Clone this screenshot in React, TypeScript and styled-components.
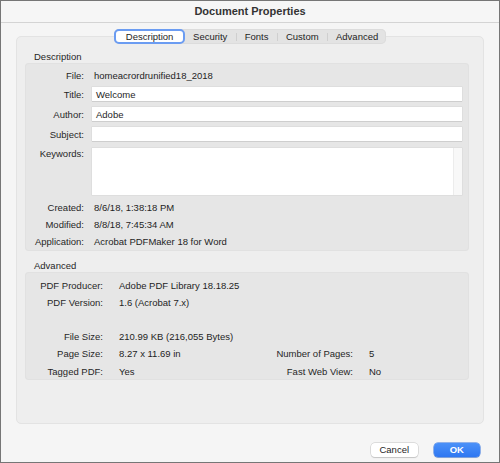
import React from "react";
import styled, { createGlobalStyle } from "styled-components";

const Global = createGlobalStyle`
  html, body { margin: 0; padding: 0; background: #f5f5f5; }
  * { box-sizing: border-box; }
  body { font-family: "Liberation Sans", Arial, Helvetica, sans-serif; font-size: 9.5px; color: #1e1e1e; }
`;

const Window = styled.div`
  width: 500px;
  height: 463px;
  border: 1px solid #767676;
  background: #f5f5f5;
  display: flex;
  flex-direction: column;
  overflow: hidden;
`;

const TitleBar = styled.div`
  height: 22px;
  flex: none;
  border-bottom: 1px solid #d4d4d4;
  background: #f6f6f6;
  display: flex;
  align-items: center;
  justify-content: center;
  font-size: 11px;
  font-weight: bold;
  color: #333333;
  padding-bottom: 1px;
`;

const Body = styled.div`
  flex: 1;
  display: flex;
  flex-direction: column;
  padding: 6px 15px 0;
`;

const TabsRow = styled.div`
  display: flex;
  justify-content: center;
  position: relative;
  z-index: 1;
  height: 15px;
`;

const TabBar = styled.div`
  display: flex;
  align-items: center;
  height: 15px;
  background: #e3e3e3;
  border-radius: 5px;
  box-shadow: inset 0 0 0 1px #dcdcdc;
`;

const Tab = styled.div<{ $active?: boolean }>`
  height: 15px;
  display: flex;
  align-items: center;
  color: #1e1e1e;
  padding: ${(p) => (p.$active ? "0 9.5px 0 10.3px" : "0 8.2px")};
  background: ${(p) => (p.$active ? "#ffffff" : "transparent")};
  border: ${(p) => (p.$active ? "2px solid #6b9cf2" : "none")};
  border-radius: 5px;
`;

const TabSep = styled.div`
  width: 1px;
  height: 8px;
  background: #cfcfcf;
`;

const Panel = styled.div`
  margin-top: -8px;
  height: 388px;
  flex: none;
  background: #eeeeee;
  border: 1px solid #e3e3e3;
  border-radius: 5px;
  padding: 13px 14px 0 8px;
  display: flex;
  flex-direction: column;
`;

const SectionTitle = styled.div<{ $mt?: number }>`
  height: 13px;
  line-height: 13px;
  padding-left: 9px;
  margin-top: ${(p) => p.$mt ?? 0}px;
  color: #262626;
`;

const Group = styled.div<{ $h: number }>`
  height: ${(p) => p.$h}px;
  background: #e6e6e6;
  border-radius: 4px;
  box-shadow: inset 0 0 0 1px #e1e1e1;
`;

const DescGroup = styled(Group)`
  padding: 0 7px 1px 0;
`;

const Row = styled.div<{ $h: number; $mt?: number }>`
  display: grid;
  grid-template-columns: 59px 1fr;
  column-gap: 8px;
  align-items: center;
  height: ${(p) => p.$h}px;
  margin-top: ${(p) => p.$mt ?? 0}px;
`;

const Label = styled.div<{ $top?: boolean }>`
  text-align: right;
  color: #262626;
  white-space: nowrap;
  align-self: ${(p) => (p.$top ? "start" : "center")};
  line-height: ${(p) => (p.$top ? "11px" : "normal")};
`;

const Value = styled.div`
  padding-left: 2px;
  color: #1e1e1e;
  white-space: nowrap;
`;

const Input = styled.div`
  height: 14px;
  background: #ffffff;
  padding-left: 4px;
  display: flex;
  align-items: center;
  box-shadow: 0 0 0 0.5px #d6d6d6, 0 1px 0 #c6c6c6;
  color: #1e1e1e;
`;

const TextArea = styled.div`
  height: 100%;
  background: #ffffff;
  display: flex;
  justify-content: flex-end;
  box-shadow: 0 0 0 0.5px #d6d6d6;
`;

const ScrollTrack = styled.div`
  width: 9px;
  background: #f8f8f8;
  border-left: 1px solid #ececec;
`;

const AdvGrid = styled.div`
  display: grid;
  grid-template-columns: 78px 141px 77px 1fr;
  column-gap: 16px;
  grid-auto-rows: 17.2px;
  align-items: center;
  padding-top: 4.5px;
`;

const AdvLabel = styled.div`
  text-align: right;
  color: #262626;
  white-space: nowrap;
`;

const AdvValue = styled.div<{ $span?: boolean }>`
  white-space: nowrap;
  color: #1e1e1e;
  grid-column: ${(p) => (p.$span ? "2 / span 3" : "auto")};
`;

const Blank = styled.div`
  grid-column: 1 / -1;
`;

const Footer = styled.div`
  display: flex;
  justify-content: flex-end;
  gap: 16px;
  padding: 19px 4px 0 0;
`;

const Button = styled.div<{ $primary?: boolean }>`
  width: 46.5px;
  height: 13.5px;
  border-radius: 4px;
  display: flex;
  align-items: center;
  justify-content: center;
  color: ${(p) => (p.$primary ? "#ffffff" : "#1e1e1e")};
  background: ${(p) => (p.$primary ? "linear-gradient(#4b91f8, #2f77f1)" : "#ffffff")};
  box-shadow: ${(p) =>
    p.$primary
      ? "0 0 0 0.5px #2c6fe0, 0 1px 1px rgba(0,0,0,0.15)"
      : "0 0 0 0.5px #c4c4c4, 0 1px 1px rgba(0,0,0,0.18)"};
  font-weight: ${(p) => (p.$primary ? "bold" : "normal")};
`;

const tabs = ["Description", "Security", "Fonts", "Custom", "Advanced"];
const activeTab = 0;

export default function App() {
  return (
    <>
      <Global />
      <Window>
        <TitleBar>Document Properties</TitleBar>
        <Body>
          <TabsRow>
            <TabBar>
              {tabs.map((t, i) => (
                <React.Fragment key={t}>
                  {i > 0 && i - 1 !== activeTab && i !== activeTab && <TabSep />}
                  <Tab $active={i === activeTab}>{t}</Tab>
                </React.Fragment>
              ))}
            </TabBar>
          </TabsRow>
          <Panel>
            <SectionTitle>Description</SectionTitle>
            <DescGroup $h={188}>
              <Row $h={14} $mt={5}>
                <Label>File:</Label>
                <Value>homeacrordrunified18_2018</Value>
              </Row>
              <Row $h={14} $mt={5}>
                <Label>Title:</Label>
                <Input>Welcome</Input>
              </Row>
              <Row $h={14} $mt={6}>
                <Label>Author:</Label>
                <Input>Adobe</Input>
              </Row>
              <Row $h={14} $mt={6}>
                <Label>Subject:</Label>
                <Input />
              </Row>
              <Row $h={47} $mt={7}>
                <Label $top>Keywords:</Label>
                <TextArea>
                  <ScrollTrack />
                </TextArea>
              </Row>
              <Row $h={17} $mt={4}>
                <Label>Created:</Label>
                <Value>8/6/18, 1:38:18 PM</Value>
              </Row>
              <Row $h={17}>
                <Label>Modified:</Label>
                <Value>8/8/18, 7:45:34 AM</Value>
              </Row>
              <Row $h={17}>
                <Label>Application:</Label>
                <Value>Acrobat PDFMaker 18 for Word</Value>
              </Row>
            </DescGroup>
            <SectionTitle $mt={8}>Advanced</SectionTitle>
            <Group $h={108}>
              <AdvGrid>
                <AdvLabel>PDF Producer:</AdvLabel>
                <AdvValue $span>Adobe PDF Library 18.18.25</AdvValue>
                <AdvLabel>PDF Version:</AdvLabel>
                <AdvValue $span>1.6 (Acrobat 7.x)</AdvValue>
                <Blank />
                <AdvLabel>File Size:</AdvLabel>
                <AdvValue $span>210.99 KB (216,055 Bytes)</AdvValue>
                <AdvLabel>Page Size:</AdvLabel>
                <AdvValue>8.27 x 11.69 in</AdvValue>
                <AdvLabel>Number of Pages:</AdvLabel>
                <AdvValue>5</AdvValue>
                <AdvLabel>Tagged PDF:</AdvLabel>
                <AdvValue>Yes</AdvValue>
                <AdvLabel>Fast Web View:</AdvLabel>
                <AdvValue>No</AdvValue>
              </AdvGrid>
            </Group>
          </Panel>
          <Footer>
            <Button>Cancel</Button>
            <Button $primary>OK</Button>
          </Footer>
        </Body>
      </Window>
    </>
  );
}
